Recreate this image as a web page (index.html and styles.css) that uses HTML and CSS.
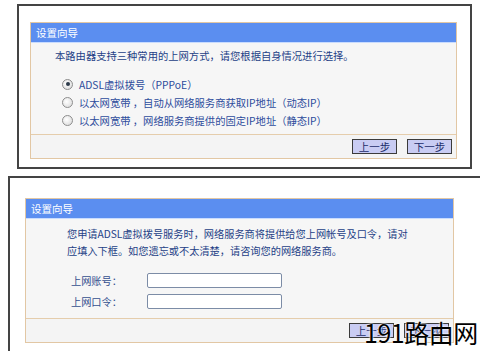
FILE: index.html
```html
<!DOCTYPE html>
<html lang="zh-CN">
<head>
  <meta charset="UTF-8"/>
  <meta name="viewport" content="width=device-width, initial-scale=1.0"/>
  <title>设置向导</title>
  <link rel="stylesheet" href="styles.css">
</head>
<body>
  <div class="shot shot-top">
    <div class="panel">
      <div class="panel-head">设置向导</div>
      <div class="panel-body">
        <p class="intro">本路由器支持三种常用的上网方式，请您根据自身情况进行选择。</p>
        <ul class="options">
          <li><span class="radio checked"></span>ADSL虚拟拨号（PPPoE）</li>
          <li><span class="radio"></span>以太网宽带 ，自动从网络服务商获取IP地址（动态IP）</li>
          <li><span class="radio"></span>以太网宽带 ，网络服务商提供的固定IP地址（静态IP）</li>
        </ul>
      </div>
      <div class="panel-foot">
        <button class="btn">上一步</button>
        <button class="btn">下一步</button>
      </div>
    </div>
  </div>

  <div class="shot shot-bottom">
    <div class="panel">
      <div class="panel-head">设置向导</div>
      <div class="panel-body">
        <p class="note">您申请ADSL虚拟拨号服务时，网络服务商将提供给您上网帐号及口令，请对<br>应填入下框。如您遗忘或不太清楚，请咨询您的网络服务商。</p>
        <div class="form">
          <div class="form-row"><label for="user">上网账号：</label><input type="text" id="user"/></div>
          <div class="form-row"><label for="pass">上网口令：</label><input type="password" id="pass"/></div>
        </div>
      </div>
      <div class="panel-foot">
        <button class="btn">上一步</button>
        <button class="btn">下一步</button>
      </div>
    </div>
  </div>

  <div class="watermark">191路由网</div>
</body>
</html>
```

FILE: styles.css
```css
html, body { height: 351px; overflow: hidden; }
body { margin: 0; background: #fff; font-family: "Noto Sans CJK SC", "Noto Sans", sans-serif; color: #243f86; position: relative; }

.shot { background: #fff; border: 2px solid #444; box-sizing: border-box; }
.shot-top { margin: 4px 0 0 17px; width: 455px; height: 165px; padding: 16px 13px 0 11px; }
.shot-bottom { margin: 7px 0 0 8px; width: 472px; height: 175px; padding: 20px 0 0 15px; border-right: none; border-bottom: none; }
.shot-bottom .panel { width: 427px; }

.panel { border: 1px solid #e2c7a4; background: #f6f6f6; }
.panel-head { height: 20px; line-height: 20px; background: #5b8ef0; border-bottom: 1px solid #c9dcff; box-sizing: border-box; color: #fff; font-size: 10.5px; padding-left: 5px; }
.panel-body { height: 91px; box-sizing: border-box; padding-top: 6px; }
.shot-bottom .panel-body { height: 99px; }

.intro { margin: 0 0 12px 24px; font-size: 10.3px; line-height: 14px; }
.options { list-style: none; margin: 0; padding: 0 0 0 31px; }
.options li { height: 18px; display: flex; align-items: center; gap: 6px; font-size: 10.3px; color: #2d4c9c; }
.radio { width: 9px; height: 9px; border: 1px solid #8d8d8d; border-radius: 50%; background: radial-gradient(circle at 40% 40%, #fff, #d6d6d6); position: relative; flex: none; }
.radio.checked::after { content: ""; position: absolute; left: 2.5px; top: 2.5px; width: 4px; height: 4px; border-radius: 50%; background: #2c3a4a; }

.note { margin: 0 0 11px 41px; font-size: 10.2px; line-height: 17px; }
.form { padding-left: 45px; }
.form-row { height: 21px; display: flex; align-items: center; }
.form-row label { width: 76px; font-size: 10.2px; color: #34508f; }
.form-row input { width: 135px; height: 15px; box-sizing: border-box; border: 1px solid #7c8ca6; border-radius: 2px; background: #fff; padding: 0; }

.panel-foot { height: 24px; border-top: 1px solid #e5cdac; box-sizing: border-box; display: flex; justify-content: flex-end; align-items: center; gap: 10px; padding-right: 4px; background: #f4f4f4; }
.btn { width: 45px; height: 15px; padding: 0; background: #c9ccf3; border: 1px solid #3b3b3b; color: #1d2d6a; font-family: inherit; font-size: 10.5px; line-height: 13px; cursor: pointer; }

.watermark { position: absolute; left: 364px; top: 317px; font-size: 25px; line-height: 30px; color: #000; letter-spacing: -0.5px; text-shadow: 0 0 2px #fff, 0 0 2px #fff; }
```
